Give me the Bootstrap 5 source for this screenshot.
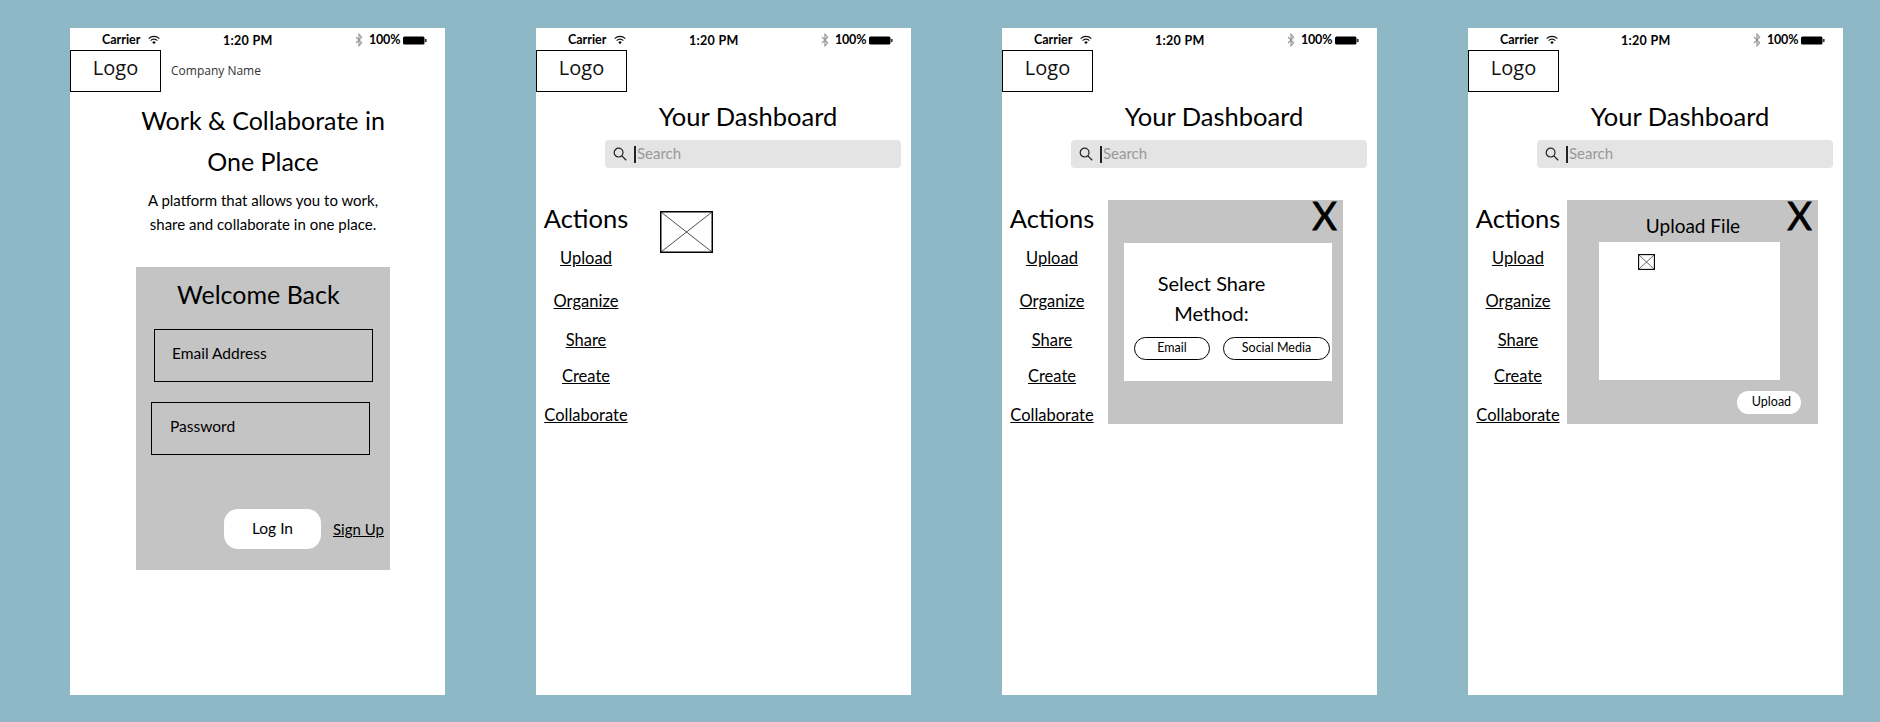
<!DOCTYPE html>
<html lang="en">
<head>
    <meta charset="UTF-8">
    <meta name="viewport" content="width=device-width, initial-scale=1.0">
    <title>Wireframes</title>
    <link href="https://cdn.jsdelivr.net/npm/bootstrap@5.3.0/dist/css/bootstrap.min.css" rel="stylesheet">
    <style>
        body {
            background-color: #8fb8c6;
            color: #000;
            font-family: "Comic Sans MS", Lato, sans-serif;
            height: 722px;
            overflow: hidden;
        }
        .board { padding: 28px 0 0 70px; gap: 91px; }
        .phone { width: 375px; height: 667px; background: #fff; flex: none; }

        .status-bar { height: 22px; font-size: 12.5px; font-weight: 700; line-height: 26px; }
        .status-left { width: 153px; padding-left: 32px; gap: 8px; padding-top: 2px; }
        .status-time { width: 132px; letter-spacing: .3px; }
        .status-right { gap: 6px; padding-top: 2px; }
        .status-right .pct { margin-right: -3px; letter-spacing: -.2px; }

        .logo-box {
            width: 91px; height: 42px; border: 1.5px solid #000;
            font-family: "Open Sans", sans-serif; font-size: 20px; line-height: 34px;
            text-align: center; color: #111;
        }
        .company { font-family: "Open Sans", sans-serif; font-size: 12px; color: #333; margin: 12px 0 0 10px; }

        .hero-title { font-size: 25px; line-height: 41px; margin: 8px 0 0; font-weight: 400; padding-left: 11px; }
        .hero-text { font-size: 15px; line-height: 24px; margin: 6px 0 0; padding-left: 11px; }

        .login-panel { width: 254px; height: 303px; margin: 31px 0 0 66px; background: #c4c4c4; padding-top: 9px; }
        .login-title { font-size: 25px; line-height: 36px; margin: 0 0 17px 41px; font-weight: 400; }
        .login-field {
            display: block; width: 219px; height: 53px; border: 1.5px solid #000; border-radius: 0;
            background: transparent; font-size: 15.5px; line-height: 20px; padding: 13px 0 0 17px;
        }
        .field-email { margin: 0 0 20px 18px; }
        .field-pass { margin: 0 0 54px 15px; padding-left: 18px; }
        .login-row { padding-left: 88px; gap: 12px; }
        .login-btn { width: 97px; height: 40px; border-radius: 14px; background: #fff; font-size: 15.5px; border: 0; padding: 0; color: #000; }
        .plain-link { color: #000; }
        .signup { font-size: 15px; }

        .dash-head { margin-left: 69px; width: 296px; }
        .dash-title { font-size: 25.5px; line-height: 34px; margin: 7px 10px 7px 0; font-weight: 400; }
        .search-box { height: 28px; background: #e4e4e4; border-radius: 4px; padding-left: 8px; color: #999; font-size: 15px; line-height: 24px; }
        .search-caret { width: 2px; height: 17px; background: #222; margin: 0 1px 0 7px; flex: none; }
        .search-hint { margin-top: -2px; }

        .dash-main { margin-top: 32px; }
        .actions-col { width: 88px; margin-left: 6px; flex: none; }
        .actions-title { font-size: 25.5px; line-height: 36px; margin: 0 0 12px; font-weight: 400; }
        .actions-col a { display: block; font-size: 16.5px; line-height: 20px; white-space: nowrap; }
        .gap-org { margin-top: 23px; }
        .gap-share { margin-top: 19px; }
        .gap-create { margin-top: 16px; }
        .gap-coll { margin-top: 19px; }

        .thumb { width: 53px; height: 42px; margin: 11px 0 0 30px; flex: none; display: block; }

        .modal-box { height: 224px; background: #c4c4c4; position: relative; flex: none; }
        .close-x { position: absolute; top: -7px; right: 6px; font-size: 38px; line-height: 44px; font-family: Lato, sans-serif; -webkit-text-stroke: .8px #000; }

        .share-modal { width: 235px; margin-left: 12px; padding: 43px 0 0 16px; }
        .share-card { width: 208px; height: 138px; background: #fff; padding-top: 25px; }
        .share-title { font-size: 20px; line-height: 30px; margin: 0 33px 9px 0; font-weight: 400; }
        .share-btns { padding-left: 10px; gap: 13px; }
        .pill-btn { height: 23px; border: 1px solid #000; background: #fff; font-size: 12.5px; line-height: 18px; padding: 0 0 1px; color: #000; }
        .pill-email { width: 76px; }
        .pill-social { width: 107px; }

        .upload-modal { width: 251px; margin-left: 5px; padding: 11px 0 0 32px; }
        .upload-title { font-size: 19px; line-height: 30px; margin: 0 0 1px 0; width: 188px; font-weight: 400; }
        .upload-card { width: 181px; height: 138px; background: #fff; padding: 12px 0 0 39px; }
        .upload-btn { display: block; width: 64px; height: 23px; margin: 11px 0 0 138px; border: 0; background: #fff; font-size: 12.5px; line-height: 18px; padding: 0 0 2px 5px; color: #000; }
    </style>
</head>
<body>
    <svg width="0" height="0" class="d-block">
        <symbol id="ic-wifi" viewBox="0 0 11 9">
            <path d="M.6 3.2a7 7 0 0 1 9.8 0M2.4 5a4.4 4.4 0 0 1 6.2 0" fill="none" stroke="#111" stroke-width="1"/>
            <path d="M3.9 6.6a2.2 2.2 0 0 1 3.2 0L5.5 8.3z" fill="#111"/>
        </symbol>
        <symbol id="ic-bt" viewBox="0 0 8 14">
            <path d="M1 3.8l5.6 6L4 12.8V1.2l2.6 3L1 10.2" fill="none" stroke="#999" stroke-width="1.2"/>
        </symbol>
        <symbol id="ic-batt" viewBox="0 0 24 9">
            <rect x="0" y=".5" width="21.5" height="8" rx="1.5" fill="#000"/>
            <rect x="22" y="3" width="1.6" height="3" fill="#333"/>
        </symbol>
        <symbol id="ic-search" viewBox="0 0 14 14">
            <circle cx="5.6" cy="5.6" r="4.4" fill="none" stroke="#222" stroke-width="1.2"/>
            <path d="M8.9 8.9l4.3 4.3" stroke="#222" stroke-width="1.3"/>
        </symbol>
        <symbol id="ic-thumb" viewBox="0 0 53 42" preserveAspectRatio="none">
            <rect x=".75" y=".75" width="51.5" height="40.5" fill="#fff" stroke="#000" stroke-width="1.5"/>
            <path d="M1 1l51 40M52 1L1 41" stroke="#222" stroke-width=".8"/>
        </symbol>
        <symbol id="ic-thumb-sm" viewBox="0 0 17 16">
            <rect x=".6" y=".6" width="15.8" height="14.8" fill="#fff" stroke="#000" stroke-width="1.1"/>
            <path d="M1 1l15 14M16 1L1 15" stroke="#222" stroke-width=".7"/>
        </symbol>
    </svg>

    <div class="board d-flex">
        <!-- Login -->
        <div class="phone">
            <div class="status-bar d-flex">
                <div class="status-left d-flex align-items-center"><span>Carrier</span><svg width="12" height="10"><use href="#ic-wifi"/></svg></div>
                <div class="status-time">1:20 PM</div>
                <div class="status-right d-flex align-items-center"><svg width="8" height="14"><use href="#ic-bt"/></svg><span class="pct">100%</span><svg width="24" height="9"><use href="#ic-batt"/></svg></div>
            </div>
            <div class="d-flex">
                <div class="logo-box">Logo</div>
                <div class="company">Company Name</div>
            </div>
            <h1 class="hero-title text-center">Work &amp; Collaborate in<br>One Place</h1>
            <p class="hero-text text-center">A platform that allows you to work,<br>share and collaborate in one place.</p>
            <div class="login-panel">
                <h2 class="login-title">Welcome Back</h2>
                <label class="login-field field-email">Email Address</label>
                <label class="login-field field-pass">Password</label>
                <div class="login-row d-flex align-items-center">
                    <button class="btn login-btn" type="button">Log In</button>
                    <a href="#" class="plain-link signup">Sign Up</a>
                </div>
            </div>
        </div>

        <!-- Dashboard -->
        <div class="phone">
            <div class="status-bar d-flex">
                <div class="status-left d-flex align-items-center"><span>Carrier</span><svg width="12" height="10"><use href="#ic-wifi"/></svg></div>
                <div class="status-time">1:20 PM</div>
                <div class="status-right d-flex align-items-center"><svg width="8" height="14"><use href="#ic-bt"/></svg><span class="pct">100%</span><svg width="24" height="9"><use href="#ic-batt"/></svg></div>
            </div>
            <div class="logo-box">Logo</div>
            <div class="dash-head">
                <h1 class="dash-title text-center">Your Dashboard</h1>
                <div class="search-box d-flex align-items-center"><svg width="14" height="14"><use href="#ic-search"/></svg><span class="search-caret"></span><span class="search-hint">Search</span></div>
            </div>
            <div class="dash-main d-flex">
                <nav class="actions-col text-center">
                    <h2 class="actions-title">Actions</h2>
                    <a href="#" class="plain-link">Upload</a>
                    <a href="#" class="plain-link gap-org">Organize</a>
                    <a href="#" class="plain-link gap-share">Share</a>
                    <a href="#" class="plain-link gap-create">Create</a>
                    <a href="#" class="plain-link gap-coll">Collaborate</a>
                </nav>
                <svg class="thumb"><use href="#ic-thumb"/></svg>
            </div>
        </div>

        <!-- Share modal -->
        <div class="phone">
            <div class="status-bar d-flex">
                <div class="status-left d-flex align-items-center"><span>Carrier</span><svg width="12" height="10"><use href="#ic-wifi"/></svg></div>
                <div class="status-time">1:20 PM</div>
                <div class="status-right d-flex align-items-center"><svg width="8" height="14"><use href="#ic-bt"/></svg><span class="pct">100%</span><svg width="24" height="9"><use href="#ic-batt"/></svg></div>
            </div>
            <div class="logo-box">Logo</div>
            <div class="dash-head">
                <h1 class="dash-title text-center">Your Dashboard</h1>
                <div class="search-box d-flex align-items-center"><svg width="14" height="14"><use href="#ic-search"/></svg><span class="search-caret"></span><span class="search-hint">Search</span></div>
            </div>
            <div class="dash-main d-flex">
                <nav class="actions-col text-center">
                    <h2 class="actions-title">Actions</h2>
                    <a href="#" class="plain-link">Upload</a>
                    <a href="#" class="plain-link gap-org">Organize</a>
                    <a href="#" class="plain-link gap-share">Share</a>
                    <a href="#" class="plain-link gap-create">Create</a>
                    <a href="#" class="plain-link gap-coll">Collaborate</a>
                </nav>
                <div class="modal-box share-modal">
                    <span class="close-x">X</span>
                    <div class="share-card">
                        <h3 class="share-title text-center">Select Share<br>Method:</h3>
                        <div class="share-btns d-flex">
                            <button class="btn rounded-pill pill-btn pill-email" type="button">Email</button>
                            <button class="btn rounded-pill pill-btn pill-social" type="button">Social Media</button>
                        </div>
                    </div>
                </div>
            </div>
        </div>

        <!-- Upload modal -->
        <div class="phone">
            <div class="status-bar d-flex">
                <div class="status-left d-flex align-items-center"><span>Carrier</span><svg width="12" height="10"><use href="#ic-wifi"/></svg></div>
                <div class="status-time">1:20 PM</div>
                <div class="status-right d-flex align-items-center"><svg width="8" height="14"><use href="#ic-bt"/></svg><span class="pct">100%</span><svg width="24" height="9"><use href="#ic-batt"/></svg></div>
            </div>
            <div class="logo-box">Logo</div>
            <div class="dash-head">
                <h1 class="dash-title text-center">Your Dashboard</h1>
                <div class="search-box d-flex align-items-center"><svg width="14" height="14"><use href="#ic-search"/></svg><span class="search-caret"></span><span class="search-hint">Search</span></div>
            </div>
            <div class="dash-main d-flex">
                <nav class="actions-col text-center">
                    <h2 class="actions-title">Actions</h2>
                    <a href="#" class="plain-link">Upload</a>
                    <a href="#" class="plain-link gap-org">Organize</a>
                    <a href="#" class="plain-link gap-share">Share</a>
                    <a href="#" class="plain-link gap-create">Create</a>
                    <a href="#" class="plain-link gap-coll">Collaborate</a>
                </nav>
                <div class="modal-box upload-modal">
                    <span class="close-x">X</span>
                    <h3 class="upload-title text-center">Upload File</h3>
                    <div class="upload-card"><svg width="17" height="16" class="d-block"><use href="#ic-thumb-sm"/></svg></div>
                    <button class="btn rounded-pill upload-btn" type="button">Upload</button>
                </div>
            </div>
        </div>
    </div>

    <script src="https://cdn.jsdelivr.net/npm/bootstrap@5.3.0/dist/js/bootstrap.bundle.min.js"></script>
</body>
</html>
